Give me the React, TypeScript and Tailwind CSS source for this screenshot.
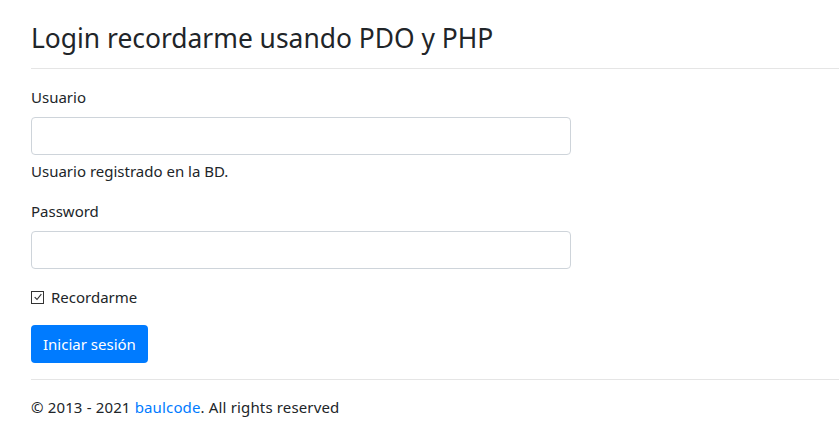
export default function App() {
  return (
    <div
      className="min-h-[446px] bg-white text-[#212529] pl-[31px] overflow-hidden"
      style={{ fontFamily: '"Noto Sans", "Open Sans", sans-serif' }}
    >
      <h1 className="pt-[21px] text-[26.4px] leading-[34px] font-normal whitespace-nowrap">
        Login recordarme usando PDO y PHP
      </h1>
      <hr className="mt-[13px] mb-[16px] border-0 border-t border-[#e5e5e5] w-[900px]" />

      <form className="w-[540px]" onSubmit={(e) => e.preventDefault()}>
        <div className="mb-[16px]">
          <label className="block text-[15px] leading-[24px] mb-[8px]">Usuario</label>
          <input
            type="text"
            className="block w-full h-[38px] rounded-[4px] border border-[#ced4da] px-3 text-[15px] outline-none"
          />
          <p className="text-[15px] leading-[24px] mt-[4px]">Usuario registrado en la BD.</p>
        </div>

        <div className="mb-[16px]">
          <label className="block text-[15px] leading-[24px] mb-[8px]">Password</label>
          <input
            type="password"
            className="block w-full h-[38px] rounded-[4px] border border-[#ced4da] px-3 text-[15px] outline-none"
          />
        </div>

        <div className="mb-[16px] flex items-center gap-[7px] h-[24px]">
          <span className="flex items-center justify-center w-[13px] h-[13px] border border-[#333] bg-white">
            <svg viewBox="0 0 12 12" className="w-[10px] h-[10px]">
              <path d="M2 6.2 L4.8 9 L10 2.6" fill="none" stroke="#333" strokeWidth="1.4" />
            </svg>
          </span>
          <span className="text-[15px] leading-[24px]">Recordarme</span>
        </div>

        <button
          type="submit"
          className="h-[38px] px-[12px] rounded-[4px] bg-[#007bff] text-white text-[15px] leading-[24px]"
        >
          Iniciar sesión
        </button>
      </form>

      <hr className="mt-[16px] mb-[15px] border-0 border-t border-[#e5e5e5] w-[900px]" />

      <p className="text-[15px] leading-[24px] tracking-[0.15px]">
        © 2013 - 2021 <a className="text-[#007bff]" href="#">baulcode</a>. All rights reserved
      </p>
    </div>
  );
}
